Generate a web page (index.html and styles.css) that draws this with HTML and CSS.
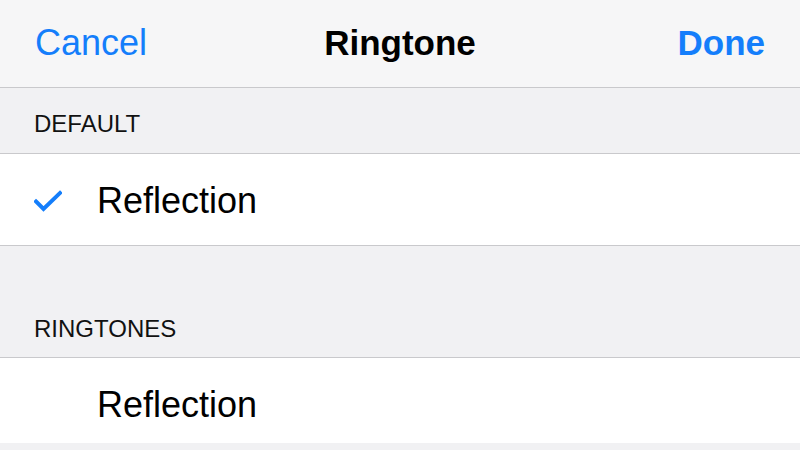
FILE: index.html
```html
<!DOCTYPE html>
<html>
<head>
<meta charset="utf-8">
<link rel="stylesheet" href="styles.css">
</head>
<body>
<div class="screen">
  <header class="nav">
    <span class="nav-btn">Cancel</span>
    <span class="nav-title">Ringtone</span>
    <span class="nav-btn nav-done">Done</span>
  </header>
  <div class="section-head first">DEFAULT</div>
  <div class="cell">
    <span class="check">
      <svg width="28" height="22" viewBox="0 0 28 22"><path d="M2 11.5 L9.5 19 L26 3" fill="none" stroke="#147efb" stroke-width="4" stroke-linecap="square" stroke-linejoin="miter"/></svg>
    </span>
    <span class="cell-label">Reflection</span>
  </div>
  <div class="section-head second">RINGTONES</div>
  <div class="cell short">
    <span class="check"></span>
    <span class="cell-label">Reflection</span>
  </div>
</div>
</body>
</html>
```
FILE: styles.css
```css
html, body {
  margin: 0;
  padding: 0;
}
body {
  background: #f1f1f3;
  font-family: "Liberation Sans", Arial, sans-serif;
  width: 800px;
  height: 450px;
  overflow: hidden;
}
.screen {
  display: flex;
  flex-direction: column;
}
.nav {
  height: 88px;
  box-sizing: border-box;
  background: #f6f6f7;
  border-bottom: 1px solid #c9c9cc;
  display: grid;
  grid-template-columns: 1fr auto 1fr;
  align-items: center;
  padding: 0 35px 2px 35px;
}
.nav-btn {
  color: #147efb;
  font-size: 36px;
}
.nav-done {
  font-weight: bold;
  font-size: 35px;
  justify-self: end;
}
.nav-title {
  font-weight: bold;
  font-size: 35px;
  color: #000;
}
.section-head {
  font-size: 24px;
  color: #111;
  padding-left: 34px;
  display: flex;
  align-items: flex-end;
  box-sizing: border-box;
}
.section-head.first {
  height: 65px;
  padding-bottom: 15px;
}
.section-head.second {
  height: 111px;
  padding-bottom: 14px;
}
.cell {
  background: #fff;
  border-top: 1px solid #c9c9cc;
  border-bottom: 1px solid #c9c9cc;
  height: 93px;
  box-sizing: border-box;
  display: flex;
  align-items: center;
  padding-top: 3px;
}
.cell.short {
  height: 86px;
  border-bottom: none;
  padding-top: 8px;
}
.check {
  width: 97px;
  padding-left: 34px;
  box-sizing: border-box;
  display: flex;
  align-items: center;
}
.cell-label {
  font-size: 36px;
  color: #000;
}
```
